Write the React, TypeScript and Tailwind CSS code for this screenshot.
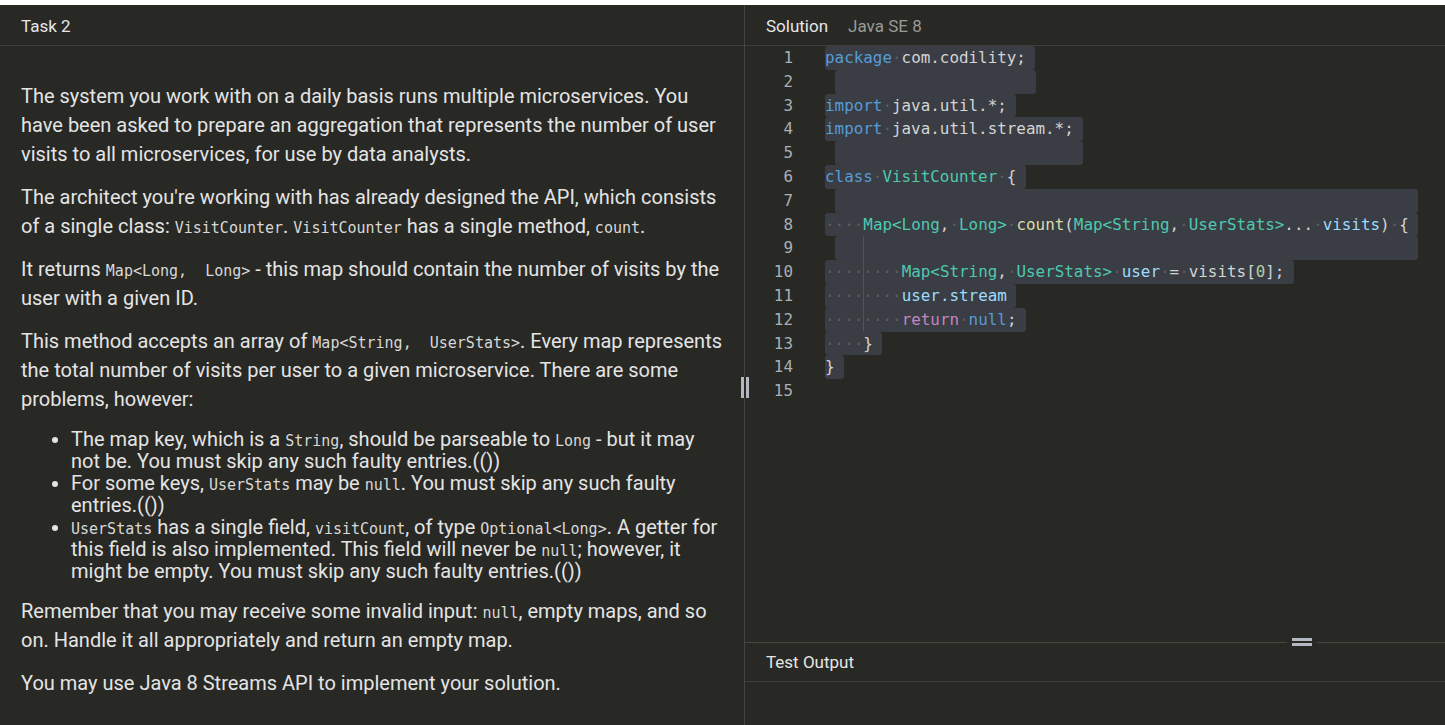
import React from "react";

type Tok = { t: string; c?: string };

const KW = "text-[#569cd6]";
const TY = "text-[#4ec9b0]";
const FN = "text-[#dcdcaa]";
const VA = "text-[#9cdcfe]";
const PL = "text-[#d4d4d4]";
const PK = "text-[#c586c0]";
const NU = "text-[#b5cea8]";

const S: Tok = { t: " " };
const ind = (n: number): Tok[] => Array.from({ length: n }, () => S);

const lines: (Tok[] | null)[] = [
  [{ t: "package", c: KW }, S, { t: "com.codility;", c: PL }],
  [],
  [{ t: "import", c: KW }, S, { t: "java.util.*;", c: PL }],
  [{ t: "import", c: KW }, S, { t: "java.util.stream.*;", c: PL }],
  [],
  [{ t: "class", c: KW }, S, { t: "VisitCounter", c: TY }, S, { t: "{", c: PL }],
  [],
  [
    ...ind(4),
    { t: "Map<Long", c: TY },
    { t: ",", c: PL },
    S,
    { t: "Long>", c: TY },
    S,
    { t: "count", c: FN },
    { t: "(", c: PL },
    { t: "Map<String", c: TY },
    { t: ",", c: PL },
    S,
    { t: "UserStats>", c: TY },
    { t: "...", c: PL },
    S,
    { t: "visits", c: VA },
    { t: ")", c: PL },
    S,
    { t: "{", c: PL },
  ],
  [],
  [
    ...ind(8),
    { t: "Map<String", c: TY },
    { t: ",", c: PL },
    S,
    { t: "UserStats>", c: TY },
    S,
    { t: "user", c: VA },
    S,
    { t: "=", c: PL },
    S,
    { t: "visits", c: PL },
    { t: "[", c: PL },
    { t: "0", c: NU },
    { t: "];", c: PL },
  ],
  [...ind(8), { t: "user.stream", c: VA }],
  [...ind(8), { t: "return", c: PK }, S, { t: "null", c: KW }, { t: ";", c: PL }],
  [...ind(4), { t: "}", c: PL }],
  [{ t: "}", c: PL }],
  null,
];

const CH = 9.57;
const lineLen = (l: Tok[] | null) => (l ? l.reduce((a, t) => a + t.t.length, 0) : 0);

function emptyWidth(i: number): number {
  const a = (lineLen(lines[i - 1]) + 1) * CH;
  const b = (lineLen(lines[i + 1]) + 1) * CH;
  return Math.max(a, b) - 10;
}

function Code({ c }: { c: string }) {
  return (
    <code className="font-['DejaVu_Sans_Mono',monospace] text-[15px] leading-[10px] text-[#d8d8d8]">{c}</code>
  );
}

export default function App() {
  return (
    <div className="w-[1445px] h-[725px] bg-white flex flex-col overflow-hidden font-['Roboto',sans-serif]">
      <div className="h-[5px] bg-white" />
      <div className="flex-1 flex bg-[#282824] min-h-0">
        {/* Left panel */}
        <div className="w-[745px] flex flex-col border-r border-[#44443f] relative">
          <div className="h-[41px] border-b border-[#40403b] flex items-center pl-[21px] pt-[3px] text-[17px] text-[#e6e6e6]">
            Task 2
          </div>
          <div className="pl-[21px] pr-[20px] pt-[36px] flex flex-col gap-[14.6px] text-[20px] leading-[28.8px] text-[#e4e4e4]">
            <p>
              The system you work with on a daily basis runs multiple microservices. You have been asked to
              prepare an aggregation that represents the number of user visits to all microservices, for use by
              data analysts.
            </p>
            <p>
              The architect you're working with has already designed the API, which consists of a single
              class: <Code c="VisitCounter" />. <Code c="VisitCounter" /> has a single method, <Code c="count" />.
            </p>
            <p>
              It returns <Code c={"Map<Long,\u00a0 Long>"} /> - this map should contain the number of visits by
              the user with a given ID.
            </p>
            <p>
              This method accepts an array of <Code c={"Map<String,\u00a0 UserStats>"} />. Every map represents
              the total number of visits per user to a given microservice. There are some problems, however:
            </p>
            <ul className="list-disc pl-[50px] leading-[22px]">
              <li>
                The map key, which is a <Code c="String" />, should be parseable to <Code c="Long" /> - but it
                may not be. You must skip any such faulty entries.(())
              </li>
              <li>
                For some keys, <Code c="UserStats" /> may be <Code c="null" />. You must skip any such faulty
                entries.(())
              </li>
              <li>
                <Code c="UserStats" /> has a single field, <Code c="visitCount" />, of type{" "}
                <Code c="Optional<Long>" />. A getter for this field is also implemented. This field will never
                be <Code c="null" />; however, it might be empty. You must skip any such faulty entries.(())
              </li>
            </ul>
            <p>
              Remember that you may receive some invalid input: <Code c="null" />, empty maps, and so on. Handle
              it all appropriately and return an empty map.
            </p>
            <p>You may use Java 8 Streams API to implement your solution.</p>
          </div>
          {/* vertical drag handle */}
          <div className="absolute right-[-5px] top-[372px] w-[9px] h-[21px] bg-[#282824] flex justify-center gap-[2px]">
            <div className="w-[3px] h-full bg-[#b4b8c0]" />
            <div className="w-[3px] h-full bg-[#b4b8c0]" />
          </div>
        </div>

        {/* Right panel */}
        <div className="flex-1 flex flex-col min-w-0">
          <div className="h-[41px] border-b border-[#40403b] flex items-center pl-[21px] pt-[3px] gap-[20px] text-[17px]">
            <span className="text-[#e6e6e6]">Solution</span>
            <span className="text-[#9a9a98]">Java SE 8</span>
          </div>
          <div className="flex-1 flex min-h-0 font-['DejaVu_Sans_Mono',monospace] text-[15.9px]">
            <div className="w-[80px] pr-[32px] flex flex-col items-end text-[#a9afb6]">
              {lines.map((_, i) => (
                <div key={i} className="h-[23.8px] leading-[23.8px]">
                  {i + 1}
                </div>
              ))}
            </div>
            <div className="flex-1 relative">
              {lines.map((l, i) => {
                if (l === null) return <div key={i} className="h-[23.8px]" />;
                if (l.length === 0)
                  return (
                    <div key={i} className="h-[23.8px] flex">
                      <div
                        className="ml-[10px] h-[23.8px] bg-[#3a3d43] rounded-[3px]"
                        style={{ width: emptyWidth(i) }}
                      />
                    </div>
                  );
                return (
                  <div key={i} className="h-[23.8px] flex">
                    <span className="h-[23.8px] leading-[23.8px] bg-[#3a3d43] rounded-[3px] pr-[9.5px] whitespace-pre">
                      {l.map((t, j) =>
                        t.t === " " && !t.c ? (
                          <span key={j} className="text-[#5e5f5c]">
                            ·
                          </span>
                        ) : (
                          <span key={j} className={t.c}>
                            {t.t}
                          </span>
                        )
                      )}
                    </span>
                  </div>
                );
              })}
              <div className="absolute left-[38px] top-[190px] w-px h-[95px] bg-[#55554f]" />
            </div>
          </div>
          {/* horizontal divider */}
          <div className="h-px bg-[#46463f] relative">
            <div className="absolute left-[542px] top-[-5px] w-[30px] h-[10px] bg-[#282824] flex flex-col items-center justify-center gap-[2px]">
              <div className="w-[20px] h-[3px] bg-[#b4b8c0]" />
              <div className="w-[20px] h-[3px] bg-[#b4b8c0]" />
            </div>
          </div>
          <div className="h-[39px] border-b border-[#40403b] flex items-center pl-[21px] pt-[1px] text-[17px] text-[#e6e6e6]">
            Test Output
          </div>
          <div className="h-[43px]" />
        </div>
      </div>
    </div>
  );
}
